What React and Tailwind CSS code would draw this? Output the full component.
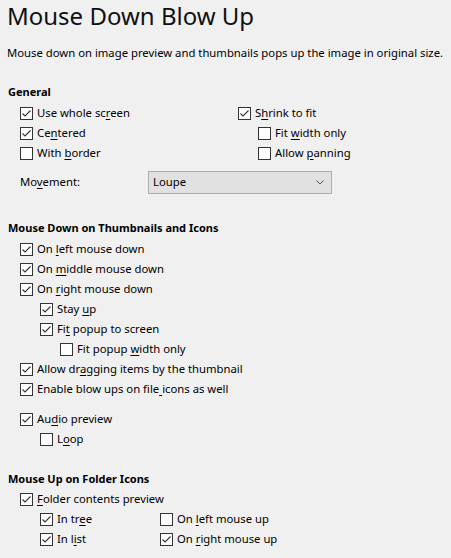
import React from "react";

const font = { fontFamily: '"Noto Sans", "Open Sans", sans-serif' };

function Check({ checked }) {
  return (
    <span className="relative inline-block w-[13px] h-[13px] shrink-0 border border-[#333333] bg-white">
      {checked && (
        <svg viewBox="0 0 11 11" className="absolute left-0 top-0 w-[11px] h-[11px]">
          <polyline points="1.5,5.5 4,8 9.5,2.5" fill="none" stroke="#333333" strokeWidth="1.1" />
        </svg>
      )}
    </span>
  );
}

function Label({ text, u }) {
  if (u === undefined) return <span>{text}</span>;
  return (
    <span>
      {text.slice(0, u)}
      <span className="underline underline-offset-2">{text[u]}</span>
      {text.slice(u + 1)}
    </span>
  );
}

function Row({ checked, text, u, indent = "" }) {
  return (
    <div className={"flex items-center h-[20px] gap-[4px] whitespace-nowrap " + indent}>
      <Check checked={checked} />
      <Label text={text} u={u} />
    </div>
  );
}

function Heading({ children, cls }) {
  return <div className={"font-bold h-[20px] leading-[20px] pl-[1px] text-[11px] " + cls}>{children}</div>;
}

export default function App() {
  return (
    <div
      className="w-[451px] h-[558px] bg-[#f0f0f0] text-black text-[11.3px] pl-[7px] overflow-hidden"
      style={font}
    >
      <div className="h-[32px] leading-[32px] text-[24px] text-[#111] whitespace-nowrap">
        Mouse Down Blow Up
      </div>
      <div className="mt-[11px] h-[20px] leading-[20px] whitespace-nowrap">
        Mouse down on image preview and thumbnails pops up the image in original size.
      </div>

      <Heading cls="mt-[19px] h-[21px]">General</Heading>
      <div className="flex pl-[13px]">
        <div className="w-[218px]">
          <Row checked text="Use whole screen" u={12} />
          <Row checked text="Centered" u={2} />
          <Row checked={false} text="With border" u={5} />
        </div>
        <div>
          <Row checked text="Shrink to fit" u={1} />
          <Row checked={false} text="Fit width only" u={4} indent="pl-[20px]" />
          <Row checked={false} text="Allow panning" u={6} indent="pl-[20px]" />
        </div>
      </div>
      <div className="flex items-center mt-[8px] pl-[13px] h-[23px]">
        <div className="w-[128px]">
          <Label text="Movement:" u={2} />
        </div>
        <div className="flex items-center justify-between w-[184px] h-[23px] border border-[#adadad] bg-[#e1e1e1] pl-[4px] pr-[7px]">
          <span>Loupe</span>
          <svg viewBox="0 0 8 5" className="w-[8px] h-[5px]">
            <polyline points="0.5,0.5 4,4 7.5,0.5" fill="none" stroke="#555" strokeWidth="1" />
          </svg>
        </div>
      </div>

      <Heading cls="mt-[24px] h-[21px]">Mouse Down on Thumbnails and Icons</Heading>
      <div className="pl-[13px]">
        <Row checked text="On left mouse down" u={3} />
        <Row checked text="On middle mouse down" u={3} />
        <Row checked text="On right mouse down" u={3} />
        <Row checked text="Stay up" u={5} indent="pl-[20px]" />
        <Row checked text="Fit popup to screen" u={2} indent="pl-[20px]" />
        <Row checked={false} text="Fit popup width only" u={10} indent="pl-[40px]" />
        <Row checked text="Allow dragging items by the thumbnail" u={8} />
        <Row checked text="Enable blow ups on file icons as well" u={23} />
        <div className="mt-[10px]" />
        <Row checked text="Audio preview" u={2} />
        <Row checked={false} text="Loop" u={1} indent="pl-[20px]" />
      </div>

      <Heading cls="mt-[20px]">Mouse Up on Folder Icons</Heading>
      <div className="pl-[13px]">
        <Row checked text="Folder contents preview" u={0} />
        <div className="flex pl-[20px]">
          <div className="w-[120px]">
            <Row checked text="In tree" u={5} />
            <Row checked text="In list" u={4} />
          </div>
          <div>
            <Row checked={false} text="On left mouse up" u={3} />
            <Row checked text="On right mouse up" u={3} />
          </div>
        </div>
      </div>
    </div>
  );
}
